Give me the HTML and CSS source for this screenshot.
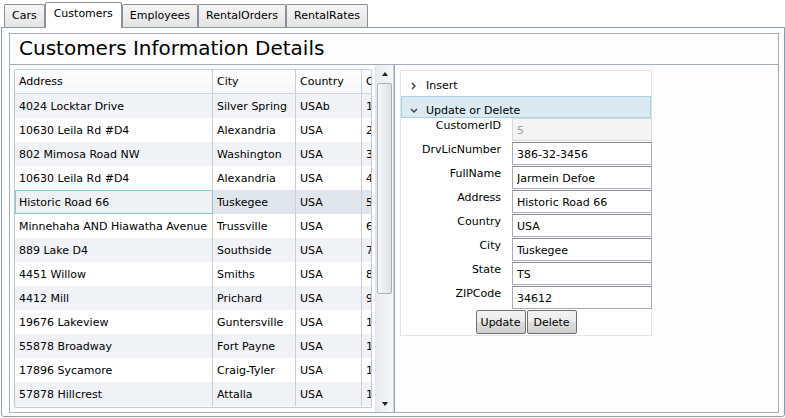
FILE: index.html
```html
<!DOCTYPE html>
<html>
<head>
<meta charset="utf-8">
<link rel="stylesheet" href="styles.css">
</head>
<body>
<div class="tabs">
  <div class="tab">Cars</div>
  <div class="tab active">Customers</div>
  <div class="tab">Employees</div>
  <div class="tab">RentalOrders</div>
  <div class="tab">RentalRates</div>
</div>
<div class="tabpanel">
  <div class="page">
    <h1 class="title">Customers Information Details</h1>
    <div class="content">
      <div class="left">
        <div class="grid">
          <div class="row head"><div class="c c1">Address</div><div class="c c2">City</div><div class="c c3">Country</div><div class="c c4">CustomerID</div></div>
          <div class="row alt"><div class="c c1">4024 Locktar Drive</div><div class="c c2">Silver Spring</div><div class="c c3">USAb</div><div class="c c4">1</div></div>
          <div class="row"><div class="c c1">10630 Leila Rd #D4</div><div class="c c2">Alexandria</div><div class="c c3">USA</div><div class="c c4">2</div></div>
          <div class="row alt"><div class="c c1">802 Mimosa Road NW</div><div class="c c2">Washington</div><div class="c c3">USA</div><div class="c c4">3</div></div>
          <div class="row"><div class="c c1">10630 Leila Rd #D4</div><div class="c c2">Alexandria</div><div class="c c3">USA</div><div class="c c4">4</div></div>
          <div class="row selected"><div class="c c1 focus">Historic Road 66</div><div class="c c2">Tuskegee</div><div class="c c3">USA</div><div class="c c4">5</div></div>
          <div class="row"><div class="c c1">Minnehaha AND Hiawatha Avenue</div><div class="c c2">Trussville</div><div class="c c3">USA</div><div class="c c4">6</div></div>
          <div class="row alt"><div class="c c1">889 Lake D4</div><div class="c c2">Southside</div><div class="c c3">USA</div><div class="c c4">7</div></div>
          <div class="row"><div class="c c1">4451 Willow</div><div class="c c2">Smiths</div><div class="c c3">USA</div><div class="c c4">8</div></div>
          <div class="row alt"><div class="c c1">4412 Mill</div><div class="c c2">Prichard</div><div class="c c3">USA</div><div class="c c4">9</div></div>
          <div class="row"><div class="c c1">19676 Lakeview</div><div class="c c2">Guntersville</div><div class="c c3">USA</div><div class="c c4">10</div></div>
          <div class="row alt"><div class="c c1">55878 Broadway</div><div class="c c2">Fort Payne</div><div class="c c3">USA</div><div class="c c4">11</div></div>
          <div class="row"><div class="c c1">17896 Sycamore</div><div class="c c2">Craig-Tyler</div><div class="c c3">USA</div><div class="c c4">12</div></div>
          <div class="row alt"><div class="c c1">57878 Hillcrest</div><div class="c c2">Attalla</div><div class="c c3">USA</div><div class="c c4">13</div></div>
        </div>
        <div class="scrollbar">
          <div class="sb-btn"><span class="arrow up"></span></div>
          <div class="thumb"></div>
          <div class="sb-track"></div>
          <div class="sb-btn"><span class="arrow down"></span></div>
        </div>
      </div>
      <div class="right">
        <div class="expander">
          <div class="exp-head">
            <svg class="chev" width="7" height="8" viewBox="0 0 7 8"><polyline points="2,1 5,4 2,7" fill="none" stroke="#3c3c3c" stroke-width="1.4"/></svg>
            <span>Insert</span>
          </div>
          <div class="exp-head open">
            <svg class="chev" width="8" height="7" viewBox="0 0 8 7"><polyline points="1,2 4,5 7,2" fill="none" stroke="#3c3c3c" stroke-width="1.4"/></svg>
            <span>Update or Delete</span>
          </div>
          <div class="form">
            <label>CustomerID</label><input class="disabled" value="5" disabled>
            <label>DrvLicNumber</label><input value="386-32-3456">
            <label>FullName</label><input value="Jarmein Defoe">
            <label>Address</label><input value="Historic Road 66">
            <label>Country</label><input value="USA">
            <label>City</label><input value="Tuskegee">
            <label>State</label><input value="TS">
            <label>ZIPCode</label><input value="34612">
          </div>
          <div class="buttons">
            <button>Update</button><button>Delete</button>
          </div>
        </div>
      </div>
    </div>
  </div>
</div>
</body>
</html>
```

FILE: styles.css
```css
html, body {
  margin: 0;
  padding: 0;
  background: #ffffff;
}
body {
  width: 785px;
  height: 418px;
  overflow: hidden;
  font-family: "DejaVu Sans", sans-serif;
  font-size: 11px;
  color: #000;
}

/* tabs */
.tabs {
  display: flex;
  align-items: flex-end;
  height: 27px;
  padding-left: 4px;
}
.tab {
  height: 23px;
  box-sizing: border-box;
  padding: 0 7px;
  border: 1px solid #8b9099;
  border-bottom: none;
  border-radius: 2px 2px 0 0;
  background: linear-gradient(#f5f5f5, #e4e4e4);
  line-height: 22px;
  color: #000;
}
.tab.active {
  position: relative;
  z-index: 1;
  height: 26px;
  margin-bottom: -1px;
  padding: 0 8px;
  background: #ffffff;
  line-height: 21px;
}

/* tab panel */
.tabpanel {
  margin-left: 1px;
  width: 784px;
  height: 390px;
  box-sizing: border-box;
  border: 1px solid #8e9bab;
  border-radius: 0 0 3px 3px;
  padding: 5px 5px 3px 7px;
  background: #fff;
}
.page {
  height: 380px;
  box-sizing: border-box;
  border: 1px solid #a3afbb;
  display: flex;
  flex-direction: column;
  background: #fdfdfd;
}
.title {
  margin: 0;
  height: 30px;
  line-height: 28px;
  font-size: 20px;
  font-weight: normal;
  padding-left: 9px;
  border-bottom: 1px solid #a3afbb;
}
.content {
  flex: 1;
  display: flex;
  min-height: 0;
}

/* grid */
.left {
  width: 384px;
  display: flex;
}
.grid {
  margin: 4px 0 4px 4px;
  width: 358px;
  box-sizing: border-box;
  border: 1px solid #c4c9d0;
  border-radius: 2px;
  overflow: hidden;
  background: #fff;
}
.row {
  display: flex;
  height: 24px;
  width: 420px;
}
.row.head {
  background: linear-gradient(#ffffff, #f5f6f8);
  box-sizing: border-box;
  border-bottom: 1px solid #d3d7dd;
}
.row.alt { background: #f0f2f6; }
.row.selected { background: #e1e5ec; }
.c {
  box-sizing: border-box;
  border-right: 1px solid #cbcfd5;
  padding-left: 4px;
  padding-top: 1px;
  line-height: 23px;
  white-space: nowrap;
  overflow: hidden;
}
.head .c { line-height: 22px; }
.c1 { width: 198px; }
.c2 { width: 83px; }
.c3 { width: 66px; }
.c4 { width: 70px; }
.c.focus {
  border: 1px solid #84c8da;
  background: #eef0f4;
  padding-left: 3px;
  padding-top: 1px;
  line-height: 21px;
}

/* scrollbar */
.scrollbar {
  margin-left: 3px;
  width: 19px;
  box-sizing: border-box;
  display: flex;
  flex-direction: column;
  background: linear-gradient(to right, #e9ebef, #f5f6f8);
  border-left: 1px solid #e1e4e8;
  border-right: 1px solid #cfd3d8;
}
.sb-btn {
  height: 17px;
  display: flex;
  align-items: center;
  justify-content: center;
}
.arrow {
  width: 0;
  height: 0;
  border-left: 3px solid transparent;
  border-right: 3px solid transparent;
}
.arrow.up { border-bottom: 4px solid #222; }
.arrow.down { border-top: 4px solid #222; }
.thumb {
  height: 209px;
  margin: 1px 1px 0;
  border: 1px solid #a9b1bc;
  border-radius: 2px;
  background: linear-gradient(to right, #f7f8fa, #dde1e7);
}
.sb-track { flex: 1; }

/* right panel */
.right {
  flex: 1;
  border-left: 1px solid #9aa5b1;
  padding: 5px 5px;
  background: #fdfdfd;
}
.expander {
  width: 252px;
  box-sizing: border-box;
  border: 1px solid #e3e3e3;
  padding: 1px 0 1px 0;
  background: #fff;
}
.exp-head {
  display: flex;
  align-items: center;
  height: 24px;
  box-sizing: border-box;
  padding-left: 9px;
  padding-top: 3px;
}
.exp-head .chev { margin-right: 9px; }
.exp-head.open {
  height: 22px;
  padding-left: 8px;
  padding-top: 6px;
  background: #dbeaf2;
  border: 1px solid #a9d5e3;
}
.exp-head.open .chev { margin-right: 8px; }

.form {
  display: grid;
  grid-template-columns: 99px 140px;
  column-gap: 11px;
  row-gap: 1px;
  padding-left: 1px;
}
.form label {
  align-self: start;
  text-align: right;
  line-height: 16px;
}
.form input {
  height: 23px;
  width: 140px;
  box-sizing: border-box;
  margin: 0;
  border: 1px solid #a8acb3;
  border-top-color: #80858d;
  padding: 2px 4px 0;
  font-family: "DejaVu Sans", sans-serif;
  font-size: 11px;
  color: #000;
  background: #fff;
}
.form input.disabled {
  background: #f4f4f4;
  border-color: #dadada;
  color: #a0a0a0;
}
.buttons {
  display: flex;
  justify-content: center;
  gap: 1px;
  margin-top: 1px;
}
.buttons button {
  width: 50px;
  height: 24px;
  margin: 0;
  padding: 0;
  border: 1px solid #707070;
  border-radius: 2px;
  background: linear-gradient(#f3f3f3 0%, #ebebeb 50%, #dddddd 51%, #cfcfcf 100%);
  font-family: "DejaVu Sans", sans-serif;
  font-size: 11px;
  color: #000;
}
```
